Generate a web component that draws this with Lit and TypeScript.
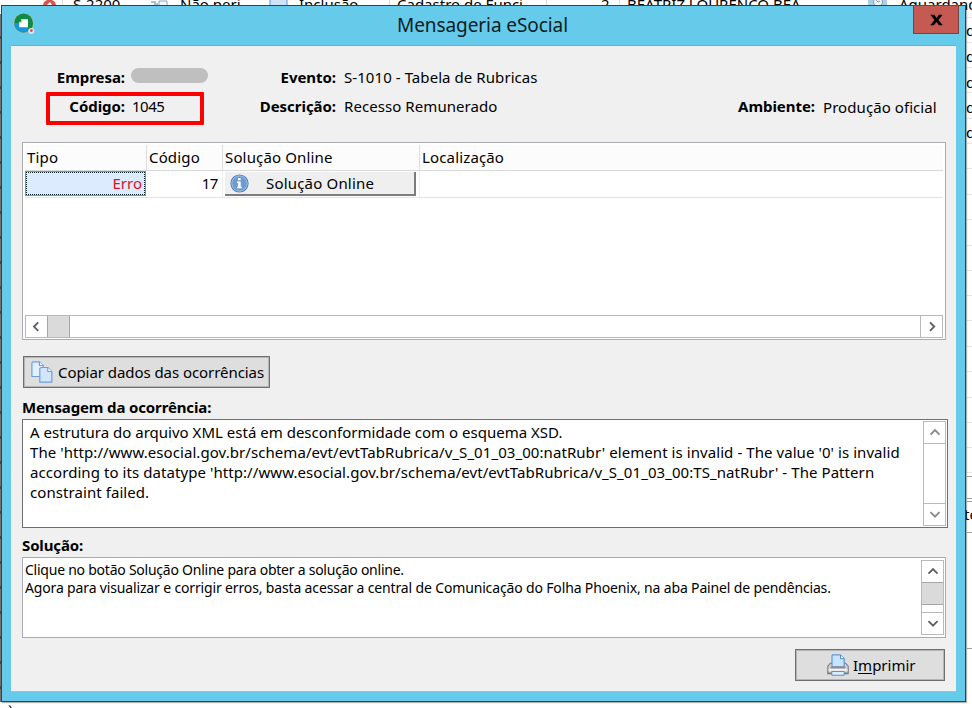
import { LitElement, html, css, svg } from "lit";
import { customElement, property } from "lit/decorators.js";
import { classMap } from "lit/directives/class-map.js";

const ARROWS: Record<string, string> = {
  up: "M3.5 9.7 L8 5.2 L12.5 9.7",
  down: "M3.5 5.2 L8 9.7 L12.5 5.2",
  left: "M9.2 3.3 L5 7.6 L9.2 11.9",
  right: "M6 3.3 L10.2 7.6 L6 11.9",
};

@customElement("scroll-bar")
export class ScrollBar extends LitElement {
  @property({ type: Boolean, reflect: true }) horizontal = false;
  @property({ type: Boolean, reflect: true }) disabled = false;
  @property({ type: Boolean }) thumb = false;

  static styles = css`
    :host {
      display: flex;
      flex-direction: column;
      flex: none;
      box-sizing: border-box;
      width: 23px;
      border: 1px solid #b9b9bd;
      background: #fff;
    }
    :host([horizontal]) {
      flex-direction: row;
      width: auto;
      height: 23px;
    }
    .arrow {
      display: flex;
      align-items: center;
      justify-content: center;
      flex: none;
      height: 21px;
      width: 21px;
      color: #606060;
    }
    :host([disabled]) .arrow {
      color: #8a8a8a;
    }
    .track {
      flex: 1;
      border: 0 solid #b9b9bd;
      border-width: 1px 0;
    }
    :host([horizontal]) .track {
      border-width: 0 1px;
    }
    .track.filled {
      border-top-color: #a6a6a6;
      border-left-color: #a6a6a6;
    }
    .thumb {
      box-sizing: border-box;
      width: 21px;
      height: 22px;
      background: #dadada;
      border-bottom: 1px solid #a6a6a6;
    }
    :host([horizontal]) .thumb {
      width: 22px;
      height: 21px;
      border-bottom: 0;
      border-right: 1px solid #a6a6a6;
    }
    svg {
      fill: none;
      stroke: currentColor;
      stroke-width: 1.9;
    }
  `;

  arrow(dir: string) {
    return html`<div class="arrow">
      <svg width="16" height="15" viewBox="0 0 16 15">
        ${svg`<path d=${ARROWS[dir]} />`}
      </svg>
    </div>`;
  }

  render() {
    return html`
      ${this.arrow(this.horizontal ? "left" : "up")}
      <div class=${classMap({ track: true, filled: this.thumb })}>
        ${this.thumb ? html`<div class="thumb"></div>` : ""}
      </div>
      ${this.arrow(this.horizontal ? "right" : "down")}
    `;
  }
}

@customElement("app-root")
export class AppRoot extends LitElement {
  static styles = css`
    :host {
      display: block;
      position: relative;
      width: 972px;
      height: 708px;
      overflow: hidden;
      background: #fff;
      color: #000;
      font-family: "Noto Sans", "Open Sans", sans-serif;
      font-size: 15px;
      line-height: 20px;
      white-space: nowrap;
    }
    * {
      box-sizing: border-box;
    }

    /* application behind the dialog */
    .behind {
      position: absolute;
      inset: 0;
      overflow: hidden;
    }
    .behind span,
    .behind i {
      position: absolute;
    }
    .behind .top {
      top: -6px;
      line-height: 20px;
    }
    .behind .edge {
      left: 0;
      top: 14px;
      width: 1px;
      height: 688px;
      background: repeating-linear-gradient(#77716f 0 22px, #4a4444 22px 25px);
    }
    .behind .line {
      left: 967px;
      width: 5px;
      height: 1px;
      background: #e4e4e4;
    }
    .behind .dark {
      background: #a0a0a4;
    }
    .behind .mark {
      left: 8px;
      top: 701px;
    }
    .behind .sep {
      top: 0;
      width: 1px;
      height: 5px;
      background: #ddd;
    }
    .behind svg {
      position: absolute;
      left: 0;
      top: 0;
    }

    .window {
      position: absolute;
      left: 1px;
      top: 5px;
      width: 965px;
      height: 697px;
      display: flex;
      flex-direction: column;
      padding: 0 9px 9px;
      border: 1px solid #2b4450;
      background: #66caea;
      box-shadow: 1px 1px 1px rgba(0, 0, 0, 0.3);
    }
    .titlebar {
      flex: none;
      display: grid;
      grid-template-columns: 60px 1fr 60px;
      height: 39px;
    }
    .logo {
      margin: 7px 0 0 2px;
    }
    .title {
      margin: 0;
      padding: 6px 2px 0 0;
      text-align: center;
      font-size: 19px;
      font-weight: 400;
      line-height: 26px;
      letter-spacing: -0.08px;
      color: #0c1d24;
    }
    .close {
      justify-self: end;
      display: flex;
      align-items: center;
      justify-content: center;
      width: 46px;
      height: 29px;
      margin: -1px -3px 0 0;
      padding: 0;
      border: 1px solid #74423f;
      background: #c45a52;
    }

    .body {
      flex: 1;
      display: flex;
      flex-direction: column;
      align-items: flex-start;
      padding: 0 8px 0 11px;
      border-top: 1px solid #62b3d0;
      border-bottom: 1px solid #8fc5da;
      background: #f0f0f0;
    }

    .info {
      position: relative;
      display: grid;
      grid-template-columns: 103px 95px 100px 384px 79px auto;
      grid-auto-rows: 29px;
      column-gap: 8px;
      align-items: center;
      height: 96px;
      padding-top: 16px;
    }
    .label {
      text-align: right;
      font-weight: 700;
      letter-spacing: -0.05px;
    }
    .value {
      letter-spacing: 0.07px;
    }
    .value.code {
      margin-left: -1px;
      letter-spacing: -0.5px;
    }
    .value.lower {
      padding-top: 2px;
    }
    .masked {
      width: 77px;
      height: 15px;
      margin: -2px 0 0 -2px;
      border-radius: 8px;
      background: #bfbfbf;
    }
    .highlight {
      position: absolute;
      left: 24px;
      top: 46px;
      width: 158px;
      height: 33px;
      border: 4px solid #fe0000;
      border-radius: 1px;
    }

    .grid {
      display: flex;
      flex-direction: column;
      width: 924px;
      height: 198px;
      padding: 2px 2px 1px;
      border: 1px solid #a9abb4;
      background: #fff;
    }
    .row {
      flex: none;
      display: grid;
      grid-template-columns: 122px 76px 197px 1fr;
      border-bottom: 1px solid #e3e3e3;
    }
    .head {
      height: 26px;
      border-color: #d9d9d9;
      background: #fcfcfc;
    }
    .head > div {
      padding: 2px 2px 0;
      border-right: 1px solid #dedede;
      letter-spacing: 0.15px;
    }
    .head > div:last-child {
      border: 0;
    }
    .line > div {
      height: 26px;
      border-right: 1px solid #f0f0f0;
    }
    .line > div:last-child {
      border: 0;
    }
    .line .type {
      padding: 0 1px 1px 0;
      border: 0;
    }
    .focus {
      height: 25px;
      padding: 1px;
      background: #25b3dd;
    }
    .focus span {
      display: block;
      height: 23px;
      padding-right: 2px;
      border: 1px dotted #08232c;
      background: #dcebfe;
      color: #e3101c;
      text-align: right;
      line-height: 21px;
    }
    .num {
      padding: 2px 4px 0 0;
      text-align: right;
      letter-spacing: -0.4px;
    }
    .cell-button {
      display: flex;
      align-items: center;
      width: 191px;
      height: 24px;
      margin: 1px 0 0 2px;
      padding: 0 0 0 5px;
      border: 0;
      border-right: 2px solid #7d7d7d;
      border-bottom: 2px solid #7d7d7d;
      background: #efefef;
      font: inherit;
      letter-spacing: 0.18px;
    }
    .cell-button svg {
      flex: none;
      margin-right: 17px;
    }
    .space {
      flex: 1;
    }

    .button {
      display: flex;
      align-items: center;
      height: 32px;
      padding: 0;
      border: 1px solid #6f6f6f;
      box-shadow: inset 0 0 0 1px #b5b5b5;
      background: #dedede;
      color: #000;
      font: inherit;
    }
    .copy {
      width: 247px;
      margin: 16px 0 9px 1px;
      padding-left: 7px;
      letter-spacing: -0.06px;
    }
    .copy svg {
      margin-right: 5px;
    }
    .print {
      align-self: flex-end;
      width: 150px;
      margin: 11px 3px 0 0;
      padding: 0 0 1px 31px;
    }
    .print svg {
      margin-right: 4px;
    }
    u {
      text-underline-offset: 2px;
    }

    .caption {
      height: 22px;
      font-weight: 700;
      letter-spacing: -0.14px;
    }
    .message,
    .solution {
      display: flex;
      justify-content: space-between;
      background: #fff;
    }
    .message {
      width: 926px;
      height: 109px;
      margin-bottom: 7px;
      padding: 1px 1px 1px 7px;
      border: 1px solid #6f6f73;
      letter-spacing: 0.07px;
    }
    .message p,
    .solution p {
      margin: 0;
    }
    .message p {
      padding-top: 1px;
    }
    .message .first {
      letter-spacing: 0.01px;
    }
    .solution {
      width: 924px;
      height: 81px;
      padding: 2px 1px 2px 2px;
      border: 1px solid #a9abb4;
      font-size: 14px;
      line-height: 17.5px;
      letter-spacing: -0.15px;
    }
    .solution p {
      padding-top: 1px;
    }
    .solution .first {
      letter-spacing: -0.24px;
    }
  `;

  logoIcon() {
    return html`<svg class="logo" width="22" height="22" viewBox="0 0 22 22">
      <circle cx="10.5" cy="10.2" r="10" fill="#d6c65a" />
      <path d="M1.2 10A9.4 9.4 0 0 1 20 10L11 11Z" fill="#0f8a4a" />
      <path d="M11 8L20 10A9.3 9.3 0 0 1 16 18L12 13Z" fill="#0f8a4a" />
      <path d="M1 10A9.6 9.6 0 0 0 16 18L13 11L8 10Z" fill="#1595dc" />
      <path d="M8.2 6.2H15V14.2H6.2V9H8.2Z" fill="#fff" />
      <path d="M8.8 6.5V9.2H6.3" fill="none" stroke="#bfcf80" />
      <circle cx="18.3" cy="18" r="3" fill="#e9dfe2" />
      <circle cx="18.4" cy="17.6" r="1.3" fill="#d0473f" />
    </svg>`;
  }

  infoIcon() {
    return html`<svg width="19" height="19" viewBox="0 0 19 19">
      <circle cx="9.5" cy="9.5" r="9.1" fill="#4a7ab8" />
      <circle cx="9.5" cy="9.5" r="7.7" fill="#6d9bd2" stroke="#a9c7ea" />
      <path
        d="M8 4h2.6v2.2H8zM7 7.6h3.7v5.2h1.1v1.4H7v-1.4h1.1V9H7z"
        fill="#fff"
      />
    </svg>`;
  }

  copyIcon() {
    return html`<svg width="22" height="22" viewBox="0 0 22 22">
      <g fill="#e3effd" stroke="#6c9fe0" stroke-width="1.2">
        <path d="M2 .8h6.5l3.7 3.7v11H.9V1.9z" />
        <path d="M8.5.8v3.7h3.7" fill="#fff" />
        <path d="M10 6.5h6.8l4 4v10.7H8.8V7.6z" fill="#d3e5fb" />
        <path d="M16.8 6.5v4h4" fill="#fff" />
      </g>
    </svg>`;
  }

  printIcon() {
    return html`<svg width="22" height="22" viewBox="0 0 22 22">
      <path
        d="M3.4 9.2h15.2l2.6 3v7.4H.8v-7.4z"
        fill="#d6d6d8"
        stroke="#77777a"
        stroke-width="1.1"
      />
      <path d="M5 .9h8.6l3.6 3.6v8.4H5z" fill="#c9e2fd" stroke="#4a8ad2" />
      <path d="M13.5 1v3.7h3.6" fill="#fff" stroke="#4a8ad2" />
      <path d="M3.6 12.4h14.8v2H3.6z" fill="#8d8d90" />
      <path d="M1.5 15.8h19" stroke="#f8f8f8" stroke-width="1.4" />
      <path d="M1.3 18.4h3v1.2h-3zM17.7 18.4h3v1.2h-3z" fill="#77777a" />
      <path d="M4.8 17.6h12.4v3.6H4.8z" fill="#eaf4ff" stroke="#4a8ad2" />
    </svg>`;
  }

  behind() {
    const texts: [number, string][] = [
      [73, "S-2200"],
      [180, "Não peri"],
      [299, "Inclusão"],
      [397, "Cadastro de Funci"],
      [601, "2"],
      [627, "BEATRIZ LOURENÇO BEA"],
      [899, "Aguardando"],
    ];
    const rows = [31, 57, 83, 108, 133];
    const lines = [17, 42, 67, 92, 118, 143, 168, 194, 219, 245, 270, 295, 320, 346, 371, 397, 422, 447, 472];
    return html`<div class="behind">
      <i class="edge"></i>
      ${texts.map(
        ([x, t]) => html`<span class="top" style="left:${x}px">${t}</span>`
      )}
      ${[62, 389, 546, 619].map(
        (x) => html`<i class="sep" style="left:${x}px"></i>`
      )}
      <svg width="972" height="5" viewBox="0 0 972 5">
        <path d="M43 5l1-3 3-2h5l3 2 1 3h-4l-2-3-3 3z" fill="#d8534f" />
        <path d="M151 2h5M154 4h4" stroke="#4b83c8" />
        <path d="M159 5V1h8v4" fill="#f4f7fb" stroke="#8aa4c8" />
        <path d="M270 -1h17v7h-17z" fill="#cfe3f8" stroke="#5f93d3" />
        <path d="M868 0h19v5h-19z" fill="#a9cfe8" />
        <circle cx="878" cy="2" r="4.5" fill="#eef3f6" stroke="#8c9aa5" />
        <path d="M876 0l2 2 2-1" fill="none" stroke="#8c9aa5" />
      </svg>
      ${rows.map(
        (y) => html`<span style="left:966px;top:${y - 11}px">d</span>`
      )}
      ${lines.map((y) => html`<i class="line" style="top:${y}px"></i>`)}
      ${[476, 498, 501, 532, 648].map(
        (y) => html`<i class="line dark" style="top:${y}px"></i>`
      )}
      <span style="left:964px;top:504px">te</span>
      <span class="mark">\`</span>
    </div>`;
  }

  render() {
    return html`
      ${this.behind()}
      <div class="window">
        <div class="titlebar">
          ${this.logoIcon()}
          <h1 class="title">Mensageria eSocial</h1>
          <button class="close" aria-label="Fechar">
            <svg width="13" height="12" viewBox="0 0 13 12">
              <path
                d="M.4.8h3.9l2.3 3.1L8.9.8h3.7L8.4 5.9l4.4 5.3H9L6.4 8 3.9 11.2H.2l4.3-5.3z"
                fill="#000"
              />
            </svg>
          </button>
        </div>
        <div class="body">
          <div class="info">
            <div class="label">Empresa:</div>
            <div class="masked"></div>
            <div class="label">Evento:</div>
            <div class="value">S-1010 - Tabela de Rubricas</div>
            <div></div>
            <div></div>
            <div class="label">Código:</div>
            <div class="value code">1045</div>
            <div class="label">Descrição:</div>
            <div class="value">Recesso Remunerado</div>
            <div class="label">Ambiente:</div>
            <div class="value lower">Produção oficial</div>
            <div class="highlight"></div>
          </div>

          <div class="grid">
            <div class="row head">
              <div>Tipo</div>
              <div>Código</div>
              <div>Solução Online</div>
              <div>Localização</div>
            </div>
            <div class="row line">
              <div class="type">
                <div class="focus"><span>Erro</span></div>
              </div>
              <div class="num">17</div>
              <div>
                <button class="cell-button">
                  ${this.infoIcon()}Solução Online
                </button>
              </div>
              <div></div>
            </div>
            <div class="space"></div>
            <scroll-bar horizontal thumb></scroll-bar>
          </div>

          <button class="button copy">
            ${this.copyIcon()}Copiar dados das ocorrências
          </button>

          <div class="caption">Mensagem da ocorrência:</div>
          <div class="message">
            <p>
              <span class="first"
                >A estrutura do arquivo XML está em desconformidade com o
                esquema XSD.</span
              ><br />
              The
              'http://www.esocial.gov.br/schema/evt/evtTabRubrica/v_S_01_03_00:natRubr'
              element is invalid - The value '0' is invalid<br />
              according to its datatype
              'http://www.esocial.gov.br/schema/evt/evtTabRubrica/v_S_01_03_00:TS_natRubr'
              - The Pattern<br />
              constraint failed.
            </p>
            <scroll-bar disabled></scroll-bar>
          </div>

          <div class="caption">Solução:</div>
          <div class="solution">
            <p>
              <span class="first"
                >Clique no botão Solução Online para obter a solução
                online.</span
              ><br />
              Agora para visualizar e corrigir erros, basta acessar a central de
              Comunicação do Folha Phoenix, na aba Painel de pendências.
            </p>
            <scroll-bar thumb></scroll-bar>
          </div>

          <button class="button print">
            ${this.printIcon()}<span>I<u>m</u>primir</span>
          </button>
        </div>
      </div>
    `;
  }
}
